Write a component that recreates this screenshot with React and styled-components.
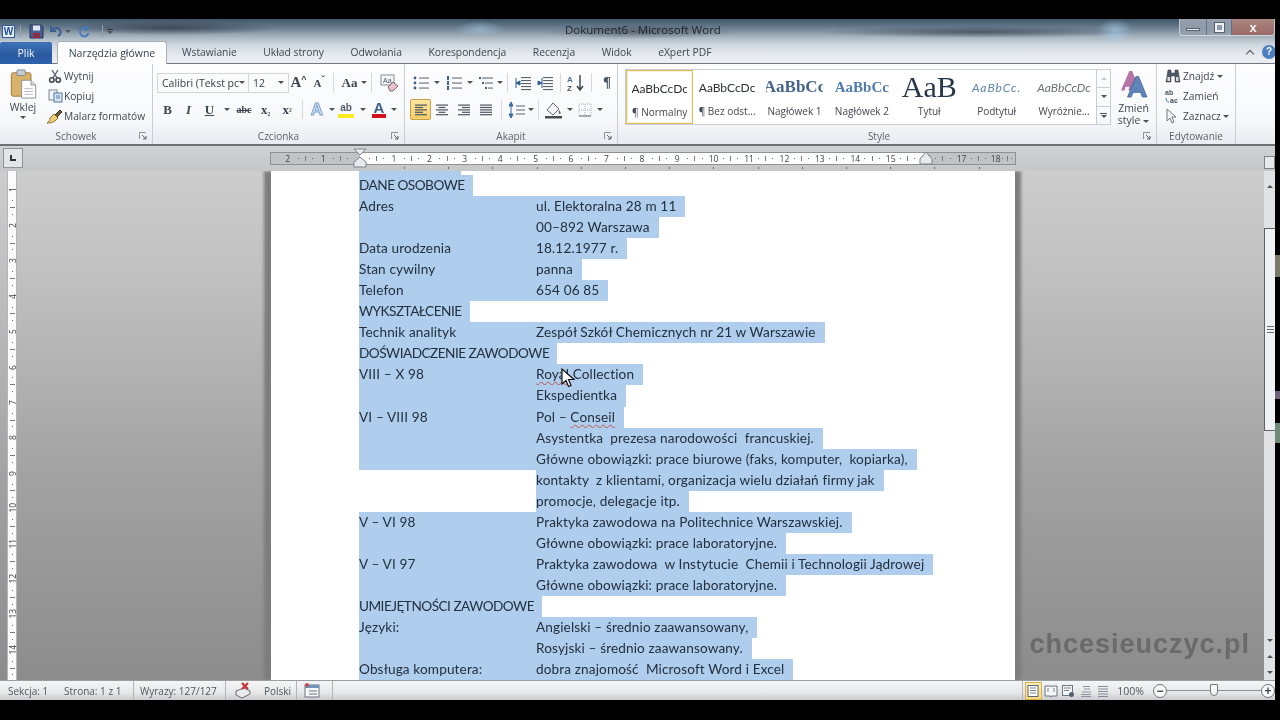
import React from 'react'
import styled, { createGlobalStyle } from 'styled-components'

const Global = createGlobalStyle`
    html, body { margin: 0; padding: 0; background: #000; }
    * { box-sizing: border-box; }
`

const uiFont = `"Open Sans", "Noto Sans", sans-serif`
const docFont = `Lato, "Open Sans", sans-serif`
const serif = `"Liberation Serif", serif`

const tabs = ['Wstawianie', 'Układ strony', 'Odwołania', 'Korespondencja', 'Recenzja', 'Widok', 'eXpert PDF']

const styleItems = [
    { sample: 'AaBbCcDc', name: '¶ Normalny', active: true, font: docFont, size: 12, color: '#2b2f36' },
    { sample: 'AaBbCcDc', name: '¶ Bez odst...', font: docFont, size: 12, color: '#2b2f36' },
    { sample: 'AaBbCc', name: 'Nagłówek 1', font: serif, size: 17, color: '#44658c', weight: 700 },
    { sample: 'AaBbCc', name: 'Nagłówek 2', font: serif, size: 15, color: '#4f7cb0', weight: 700 },
    { sample: 'AaB', name: 'Tytuł', font: serif, size: 30, color: '#27374b' },
    { sample: 'AaBbCc.', name: 'Podtytuł', font: docFont, size: 12, color: '#5f84ab', italic: true, spacing: 1 },
    { sample: 'AaBbCcDc', name: 'Wyróżnie...', font: docFont, size: 12, color: '#6c6f75', italic: true },
]

const hNumbers = [2, 1, '', ...Array.from({ length: 18 }, (_, i) => i + 1)]
const vNumbers = Array.from({ length: 14 }, (_, i) => i + 1)

const Align = ({ kind }) => {
    const widths = {
        left: [12, 8, 12, 8, 12],
        center: [12, 7, 12, 7, 12],
        right: [12, 8, 12, 8, 12],
        justify: [12, 12, 12, 12, 12],
    }[kind]
    return (
        <svg width="16" height="16" viewBox="0 0 16 16">
            {widths.map((w, i) => {
                const x = kind === 'right' ? 14 - w : kind === 'center' ? 8 - w / 2 : 2
                return <rect key={i} x={x} y={2.5 + i * 2.4} width={w} height="1.2" fill="#4f5660" />
            })}
        </svg>
    )
}

const ListIcon = ({ kind }) => (
    <svg width="18" height="16" viewBox="0 0 18 16">
        {[3, 8, 13].map((y, i) => (
            <g key={y}>
                {kind === 'bullet' && <circle cx="3" cy={y} r="1.4" fill="#3f5f85" />}
                {kind === 'number' && <rect x="2" y={y - 2} width="2" height="4" fill="#3f5f85" />}
                {kind === 'multi' && <rect x={2 + i * 3} y={y - 1} width="2" height="2" fill="#3f5f85" />}
                <rect x={kind === 'multi' ? 5 + i * 3 : 7} y={y - 0.5} width={kind === 'multi' ? 11 - i * 3 : 10} height="1.1" fill="#666e78" />
            </g>
        ))}
    </svg>
)

const IndentIcon = ({ more }) => (
    <svg width="18" height="16" viewBox="0 0 18 16">
        {[2, 5, 8, 11, 14].map(y => <rect key={y} x="7" y={y} width="10" height="1.1" fill="#5b636d" />)}
        <path d={more ? 'M6 3v10M2 6l4 2-4 2z' : 'M2 3v10M6 6L2 8l4 2z'} stroke="#2e5c93" fill="#2e5c93" strokeWidth="1" />
    </svg>
)

const PasteIcon = () => (
    <svg width="27" height="30" viewBox="0 0 28 32">
        <rect x="1" y="4" width="21" height="25" rx="2" fill="#d9b26a" stroke="#97773f" />
        <rect x="7" y="1" width="9" height="6" rx="1" fill="#c7ccd2" stroke="#7f858c" />
        <path d="M12 12h10l5 5v14H12z" fill="#fff" stroke="#8a9098" />
        <path d="M22 12v5h5" fill="#dfe3e8" stroke="#8a9098" />
        <path d="M15 21h9M15 24h9M15 27h9" stroke="#b3b8bf" />
    </svg>
)

const ScissorsIcon = () => (
    <svg width="14" height="14" viewBox="0 0 14 14">
        <path d="M4 1l5 8M10 1L5 9" stroke="#59616b" strokeWidth="1.4" />
        <circle cx="3.8" cy="11" r="2.2" fill="none" stroke="#3f4650" strokeWidth="1.6" />
        <circle cx="10.2" cy="11" r="2.2" fill="none" stroke="#3f4650" strokeWidth="1.6" />
    </svg>
)

const CopyIcon = () => (
    <svg width="15" height="14" viewBox="0 0 15 14">
        <rect x="1" y="1" width="8" height="10" fill="#eef1f5" stroke="#7d8792" />
        <rect x="6" y="4" width="8" height="9" fill="#dce8f5" stroke="#4d76a6" />
        <path d="M8 7h4M8 9h4" stroke="#4d76a6" />
    </svg>
)

const BrushIcon = () => (
    <svg width="18" height="16" viewBox="0 0 18 16">
        <path d="M9 7l5-5 2 2-5 5z" fill="#6d5a3a" stroke="#3c342a" />
        <path d="M8 6l4 4-3 3c-3 2-6 2-8 2 2-1 3-3 3-5z" fill="#f0cc72" stroke="#8f7434" />
    </svg>
)

const ClearIcon = () => (
    <svg width="20" height="18" viewBox="0 0 20 18">
        <rect x="2" y="1" width="13" height="10" fill="#f5f6f8" stroke="#858c95" />
        <text x="4" y="9" fontSize="7" fontFamily="Liberation Sans" fill="#4a5563">Aa</text>
        <path d="M9 13l5-5 5 4-5 5H11z" fill="#eac0cf" stroke="#7a6470" />
    </svg>
)

const SortIcon = () => (
    <svg width="20" height="18" viewBox="0 0 20 18">
        <text x="1" y="8" fontSize="8" fontWeight="700" fontFamily="Liberation Sans" fill="#4b6d95">A</text>
        <text x="1" y="17" fontSize="8" fontWeight="700" fontFamily="Liberation Sans" fill="#4a5563">Z</text>
        <path d="M14 1v14M11 12l3 4 3-4" fill="none" stroke="#39424d" strokeWidth="1.4" />
    </svg>
)

const SpacingIcon = () => (
    <svg width="18" height="18" viewBox="0 0 18 18">
        <path d="M3 1L1 5h4zM3 17l-2-4h4zM3 5v8" fill="#3b6ba3" stroke="#3b6ba3" />
        <path d="M8 5h9M8 9h9M8 13h9" stroke="#5b636d" strokeWidth="1.2" />
    </svg>
)

const ShadeIcon = () => (
    <svg width="20" height="18" viewBox="0 0 20 18">
        <path d="M3 9l6-7 6 6-6 6z" fill="#f3f5f8" stroke="#5d6670" />
        <path d="M15 9c2 2 2 4 1 4s-2-2-1-4z" fill="#5d6670" />
        <rect x="1" y="15" width="17" height="2.5" fill="#454d57" />
    </svg>
)

const BordersIcon = () => (
    <svg width="16" height="16" viewBox="0 0 16 16">
        <rect x="2" y="2" width="12" height="12" fill="none" stroke="#a9afb7" strokeDasharray="1 1" />
        <path d="M8 2v12M2 8h12" stroke="#a9afb7" strokeDasharray="1 1" />
        <path d="M2 14h12" stroke="#6a727c" />
    </svg>
)

const BigAIcon = () => (
    <svg width="30" height="30" viewBox="0 0 30 30">
        <path d="M1 22L10 1h3l4 10-6 11H9l1-4H6l-1 4z" fill="#a85c97" opacity="0.85" />
        <path d="M8 29L17 7h3l9 22h-5l-2-5h-8l-2 5z" fill="#5f86b8" stroke="#2f4f78" strokeWidth="0.6" />
    </svg>
)

const BinocularsIcon = () => (
    <svg width="16" height="14" viewBox="0 0 16 14">
        <path d="M3 1h3v3h4V1h3l2 12H10V7H6v6H1z" fill="#4f5862" stroke="#2f3740" strokeWidth="0.5" />
        <rect x="2.5" y="8" width="2.5" height="4" fill="#d8dde3" />
        <rect x="11" y="8" width="2.5" height="4" fill="#d8dde3" />
    </svg>
)

const ReplaceIcon = () => (
    <svg width="16" height="15" viewBox="0 0 16 15">
        <text x="0" y="6" fontSize="7" fontWeight="700" fontFamily="Liberation Sans" fill="#46505c">ab</text>
        <text x="5" y="14" fontSize="7" fontWeight="700" fontFamily="Liberation Sans" fill="#46505c">ac</text>
        <path d="M1 9c0 3 1 4 3 4" fill="none" stroke="#3e7bb8" />
    </svg>
)

const ArrowIcon = () => (
    <svg width="14" height="16" viewBox="0 0 14 16">
        <path d="M2 1v12l3-3 2 5 2-1-2-5h4z" fill="#f3f5f7" stroke="#737a83" />
    </svg>
)

const SaveIcon = () => (
    <svg width="15" height="15" viewBox="0 0 15 15">
        <path d="M1 1h11l2 2v11H1z" fill="#4a5f94" stroke="#26335c" />
        <rect x="4" y="1.5" width="7" height="5" fill="#dfe6f0" />
        <rect x="4" y="9" width="7" height="5" fill="#8d2d44" />
    </svg>
)

const UndoIcon = () => (
    <svg width="14" height="14" viewBox="0 0 14 14">
        <path d="M2 2v5h5M2.5 7C4 3.5 9 3 11 6c1.500 2.500 0 5-2 6" fill="none" stroke="#3c5f92" strokeWidth="2" />
    </svg>
)

const RedoIcon = () => (
    <svg width="14" height="14" viewBox="0 0 14 14">
        <path d="M11 1.500v4H7M11 5c-2-2-6-2-7.500 1S4 12 7 12.500c2.500 0 4-2 4.500-3.500" fill="none" stroke="#4a7ab6" strokeWidth="2" />
    </svg>
)

const SpellIcon = () => (
    <svg width="20" height="18" viewBox="0 0 20 18">
        <path d="M3 9l8-3 6 3v3l-8 4-6-3z" fill="#e9ebee" stroke="#626a74" />
        <path d="M9 1l6 6M15 1L9 7" stroke="#c8343a" strokeWidth="2.200" />
    </svg>
)

const MacroIcon = () => (
    <svg width="16" height="15" viewBox="0 0 16 15">
        <rect x="1" y="2" width="14" height="12" fill="#f5f6f8" stroke="#6d757f" />
        <rect x="1" y="2" width="14" height="3" fill="#6f93bf" />
        <circle cx="3" cy="2" r="2" fill="#c84b4b" />
        <path d="M5 8h8M5 11h8" stroke="#9aa1aa" strokeWidth="1.500" />
    </svg>
)

const ViewIcon = ({ kind }) => (
    <svg width="14" height="14" viewBox="0 0 14 14">
        {kind === 'print' && <><rect x="2" y="1.500" width="10" height="11" fill="#fff" stroke="#5f6771" /><path d="M4 4h6M4 6.500h6M4 9h6" stroke="#7b838d" /></>}
        {kind === 'read' && <><path d="M1 2h5.500l.5 1 .5-1H13v10H7.500L7 13l-.5-1H1z" fill="#f4f6f8" stroke="#6c7580" /><path d="M3 5h2M3 7h2M9 5h2M9 7h2" stroke="#7b838d" /></>}
        {kind === 'web' && <><rect x="1.500" y="1.500" width="10" height="10" fill="#f4f6f8" stroke="#6c7580" /><path d="M3 4h7M3 6.500h5" stroke="#7b838d" /><circle cx="10.500" cy="10.500" r="2.500" fill="#56606b" /></>}
        {kind === 'outline' && <path d="M4 2.500h7M5 5h6M3 8h9M2 10.500h10M2 12.500h10" stroke="#8a929c" />}
        {kind === 'draft' && <path d="M2 2.500h10M2 5h10M2 7.500h10M2 10h10M2 12.500h10" stroke="#858d97" strokeWidth="1.200" />}
    </svg>
)

const Launcher = () => (
    <LauncherBox>
        <svg width="8" height="8" viewBox="0 0 8 8">
            <path d="M0.500 7V0.500H7" fill="none" stroke="#8b929b" />
            <path d="M3 3l4 4M4 7h3V4" fill="none" stroke="#59616b" />
        </svg>
    </LauncherBox>
)

function Group({ width, label, launcher, shift, children }) {
    return (
        <GroupBox $w={width}>
            <GroupBody>{children}</GroupBody>
            <GroupLabel>
                <span />
                <LabelText $shift={shift}>{label}</LabelText>
                {launcher ? <Launcher /> : <span />}
            </GroupLabel>
        </GroupBox>
    )
}

function RulerCells({ numbers, vertical }) {
    const Cell = vertical ? VCell : HCell
    return numbers.map((n, i) => (
        <Cell key={i}>
            <RulerNum $vertical={vertical}>{n}</RulerNum>
            <RulerDot />
            <RulerTick $vertical={vertical} />
            <RulerDot />
        </Cell>
    ))
}

export default function App() {
    return (
        <Screen>
            <Global />
            <Band $h={19} />
            <Middle>
                <Win>
                    <Chrome>
                        <TitleBar>
                            <Quick>
                                <WordLogo>W</WordLogo>
                                <QuickSep />
                                <QuickBtn $w={22}><SaveIcon /></QuickBtn>
                                <QuickBtn $w={18}><UndoIcon /></QuickBtn>
                                <Caret />
                                <QuickBtn $w={26}><RedoIcon /></QuickBtn>
                                <QuickSep />
                                <Customize><Caret /></Customize>
                            </Quick>
                            <Title>Dokument6 - Microsoft Word</Title>
                            <WinControls>
                                <WinBtn $w={27}><MinBar /></WinBtn>
                                <WinBtn $w={25}><MaxBox /></WinBtn>
                                <CloseBtn>x</CloseBtn>
                            </WinControls>
                        </TitleBar>
                        <TabRow>
                            <FileTab>Plik</FileTab>
                            <ActiveTab>Narzędzia główne</ActiveTab>
                            {tabs.map(t => <Tab key={t}>{t}</Tab>)}
                            <TabEnd>
                                <Collapse />
                                <Help>?</Help>
                            </TabEnd>
                        </TabRow>
                    </Chrome>

                    <Ribbon>
                        <Group width={153} label="Schowek" launcher>
                            <PasteCol>
                                <PasteIcon />
                                <PasteLabel>Wklej</PasteLabel>
                                <Caret />
                            </PasteCol>
                            <SmallCol>
                                <SmallItem><SmallSlot><ScissorsIcon /></SmallSlot>Wytnij</SmallItem>
                                <SmallItem><SmallSlot><CopyIcon /></SmallSlot>Kopiuj</SmallItem>
                                <SmallItem><SmallSlot><BrushIcon /></SmallSlot>Malarz formatów</SmallItem>
                            </SmallCol>
                        </Group>

                        <Group width={252} label="Czcionka" launcher>
                            <Stack $left={4}>
                                <ToolRow>
                                    <Combo $w={92}>Calibri (Tekst pc<Caret /></Combo>
                                    <Combo $w={41}>12<Caret /></Combo>
                                    <Btn $w={21}><GlyphA $size={15}>A</GlyphA><Sup>^</Sup></Btn>
                                    <Btn $w={20}><GlyphA $size={11}>A</GlyphA><Sup>ˇ</Sup></Btn>
                                    <Sep />
                                    <Btn $w={23}><GlyphA $size={13}>Aa</GlyphA></Btn>
                                    <Caret />
                                    <Sep />
                                    <Btn $w={26}><ClearIcon /></Btn>
                                </ToolRow>
                                <ToolRow>
                                    <Btn $w={21}><GlyphA $size={13}>B</GlyphA></Btn>
                                    <Btn $w={21}><GlyphA $size={13} $italic>I</GlyphA></Btn>
                                    <Btn $w={21}><GlyphA $size={13} $under>U</GlyphA></Btn>
                                    <CaretSlot $w={13}><Caret /></CaretSlot>
                                    <Btn $w={22}><Strike>abc</Strike></Btn>
                                    <Btn $w={21}><GlyphA $size={13}>x<Tiny>₂</Tiny></GlyphA></Btn>
                                    <Btn $w={22}><GlyphA $size={13}>x<Tiny>²</Tiny></GlyphA></Btn>
                                    <Sep />
                                    <Btn $w={20}><GlowA>A</GlowA></Btn>
                                    <CaretSlot $w={9}><Caret /></CaretSlot>
                                    <Btn $w={20}><ColorMark $bar="#f6ec1e">ab</ColorMark></Btn>
                                    <CaretSlot $w={13}><Caret /></CaretSlot>
                                    <Btn $w={20}><ColorMark $bar="#d3121f" $big>A</ColorMark></Btn>
                                    <CaretSlot $w={10}><Caret /></CaretSlot>
                                </ToolRow>
                            </Stack>
                        </Group>

                        <Group width={213} label="Akapit" launcher>
                            <Stack $left={5}>
                                <ToolRow>
                                    <Btn $w={22}><ListIcon kind="bullet" /></Btn>
                                    <CaretSlot $w={10}><Caret /></CaretSlot>
                                    <Btn $w={23}><ListIcon kind="number" /></Btn>
                                    <CaretSlot $w={10}><Caret /></CaretSlot>
                                    <Btn $w={22}><ListIcon kind="multi" /></Btn>
                                    <CaretSlot $w={6}><Caret /></CaretSlot>
                                    <Sep />
                                    <Btn $w={22}><IndentIcon /></Btn>
                                    <Btn $w={22}><IndentIcon more /></Btn>
                                    <Sep />
                                    <Btn $w={22}><SortIcon /></Btn>
                                    <Sep />
                                    <Btn $w={22}><Pilcrow>¶</Pilcrow></Btn>
                                </ToolRow>
                                <ToolRow>
                                    <Btn $w={21} $active><Align kind="left" /></Btn>
                                    <Btn $w={22}><Align kind="center" /></Btn>
                                    <Btn $w={22}><Align kind="right" /></Btn>
                                    <Btn $w={22}><Align kind="justify" /></Btn>
                                    <Sep />
                                    <Btn $w={22}><SpacingIcon /></Btn>
                                    <CaretSlot $w={6}><Caret /></CaretSlot>
                                    <Sep />
                                    <Btn $w={22}><ShadeIcon /></Btn>
                                    <CaretSlot $w={10}><Caret /></CaretSlot>
                                    <Btn $w={20}><BordersIcon /></Btn>
                                    <CaretSlot $w={10}><Caret /></CaretSlot>
                                </ToolRow>
                            </Stack>
                        </Group>

                        <Group width={539} label="Style" launcher shift={16}>
                            <Gallery>
                                {styleItems.map(s => (
                                    <StyleItem key={s.name} $active={s.active}>
                                        <StyleSample $font={s.font} $size={s.size} $color={s.color} $weight={s.weight} $italic={s.italic} $spacing={s.spacing}>{s.sample}</StyleSample>
                                        <StyleName>{s.name}</StyleName>
                                    </StyleItem>
                                ))}
                            </Gallery>
                            <GalleryScroll>
                                <ScrollCell><Caret $up $pale /></ScrollCell>
                                <ScrollCell><Caret /></ScrollCell>
                                <ScrollCell><More /><Caret /></ScrollCell>
                            </GalleryScroll>
                            <ChangeStyle>
                                <BigAIcon />
                                <ChangeLabel>Zmień</ChangeLabel>
                                <ChangeLabel>style <Caret /></ChangeLabel>
                            </ChangeStyle>
                        </Group>

                        <Group width={79} label="Edytowanie">
                            <EditCol>
                                <SmallItem><EditSlot><BinocularsIcon /></EditSlot>Znajdź <Caret /></SmallItem>
                                <SmallItem><EditSlot><ReplaceIcon /></EditSlot>Zamień</SmallItem>
                                <SmallItem><EditSlot><ArrowIcon /></EditSlot>Zaznacz <Caret /></SmallItem>
                            </EditCol>
                        </Group>
                    </Ribbon>

                    <RulerRow>
                        <TabCorner><CornerMark /></TabCorner>
                        <HRuler>
                            <RulerCells numbers={hNumbers} />
                            <IndentMark $left={82}>
                                <svg width="14" height="20" viewBox="0 0 14 20">
                                    <path d="M1 1h12L7 7zM7 9l6 5v5H1v-5z" fill="#e8eaed" stroke="#7c838b" />
                                </svg>
                            </IndentMark>
                            <IndentMark $left={648}>
                                <svg width="14" height="20" viewBox="0 0 14 20">
                                    <path d="M7 4l6 7v5H1v-5z" fill="#e8eaed" stroke="#7c838b" />
                                </svg>
                            </IndentMark>
                        </HRuler>
                        <RulerToggle />
                    </RulerRow>

                    <Workspace>
                        <VRuler>
                            <RulerCells numbers={vNumbers} vertical />
                        </VRuler>
                        <Canvas>
                            <Page>
                                <TopSliver />
                                {rows.map((r, i) => (
                                    <Line key={i}>
                                        <LeftCell $solo={!r.right} $clear={r.clear}>{r.left}</LeftCell>
                                        {r.right && <RightCell>{r.right}</RightCell>}
                                    </Line>
                                ))}
                            </Page>
                            <Watermark>chcesieuczyc.pl</Watermark>
                            <Pointer>
                                <svg width="14" height="20" viewBox="0 0 14 20">
                                    <path d="M1 1v15l4-3.500 2.500 6 2.500-1-2.500-6H13z" fill="#fff" stroke="#111" strokeWidth="1.200" />
                                </svg>
                            </Pointer>
                        </Canvas>
                        <ScrollBar>
                            <ScrollArrow $top={7}><Caret $up /></ScrollArrow>
                            <Thumb><Grip /></Thumb>
                            <ScrollFoot>
                                <ScrollArrow><Caret /></ScrollArrow>
                                <ScrollArrow><Caret $up /></ScrollArrow>
                                <ScrollArrow><Caret /></ScrollArrow>
                            </ScrollFoot>
                        </ScrollBar>
                    </Workspace>

                    <StatusBar>
                        <StatusText $w={56} $left={8}>Sekcja: 1</StatusText>
                        <StatusText $w={67}>Strona: 1 z 1</StatusText>
                        <StatusSep />
                        <StatusText $w={83} $left={4}>Wyrazy: 127/127</StatusText>
                        <StatusSep />
                        <StatusIcon $w={30}><SpellIcon /></StatusIcon>
                        <StatusText $w={30} $left={6}>Polski</StatusText>
                        <StatusSep />
                        <StatusIcon $w={31} $right={6}><MacroIcon /></StatusIcon>
                        <StatusSep />
                        <StatusRight>
                            <StatusSep />
                            <ViewBtn $active><ViewIcon kind="print" /></ViewBtn>
                            <ViewBtn><ViewIcon kind="read" /></ViewBtn>
                            <ViewBtn><ViewIcon kind="web" /></ViewBtn>
                            <ViewBtn><ViewIcon kind="outline" /></ViewBtn>
                            <ViewBtn><ViewIcon kind="draft" /></ViewBtn>
                            <Zoom>100%</Zoom>
                            <ZoomRound>−</ZoomRound>
                            <ZoomTrack><ZoomThumb /></ZoomTrack>
                            <ZoomRound>+</ZoomRound>
                        </StatusRight>
                    </StatusBar>
                </Win>
                <Noise />
            </Middle>
            <Band $h={20} />
        </Screen>
    )
}

const Screen = styled.div`
    width: 1280px;
    height: 720px;
    display: flex;
    flex-direction: column;
    background: #000;
    overflow: hidden;
    font-family: ${uiFont};
    filter: blur(0.35px);
`
const Band = styled.div`
    height: ${p => p.$h}px;
    flex: none;
    background: #000;
`
const Middle = styled.div`
    flex: 1;
    display: flex;
    min-height: 0;
`
const Win = styled.div`
    width: 1275px;
    display: flex;
    flex-direction: column;
`
const Noise = styled.div`
    flex: 1;
    background:
        linear-gradient(#000 0 236px, #7b7a68 236px 258px, #000 258px 372px, #6f6478 372px 380px, #000 380px 404px, #718a78 404px 424px, #000 424px);
`
const Chrome = styled.div`
    height: 45px;
    flex: none;
    display: flex;
    flex-direction: column;
    background:
        radial-gradient(ellipse 110px 7px at 170px 9px, rgba(35, 45, 60, 0.65), transparent),
        radial-gradient(ellipse 160px 6px at 980px 13px, rgba(35, 45, 60, 0.6), transparent),
        radial-gradient(ellipse 100px 7px at 640px 13px, rgba(35, 45, 60, 0.45), transparent),
        radial-gradient(ellipse 18px 12px at 1115px 12px, rgba(170, 210, 240, 0.7), transparent),
        radial-gradient(ellipse 24px 8px at 480px 10px, rgba(170, 205, 230, 0.55), transparent),
        linear-gradient(#3f5468 0, #677a8c 8px, #a8b5c0 18px, #d0d8de 26px, #e6eaee 36px, #eceff3 45px);
`
const TitleBar = styled.div`
    height: 22px;
    display: grid;
    grid-template-columns: 565px auto 1fr;
    align-items: start;
`
const Quick = styled.div`
    display: flex;
    align-items: center;
    height: 22px;
    padding: 2px 0 0 2px;
`
const WordLogo = styled.span`
    width: 13px;
    height: 13px;
    background: #e8eef7;
    border: 1px solid #2f5d9c;
    color: #1d4f96;
    font: 700 10px/11px "Liberation Sans", sans-serif;
    text-align: center;
`
const QuickSep = styled.span`
    width: 1px;
    height: 13px;
    margin: 0 4px 0 5px;
    background: #94a0ab;
`
const QuickBtn = styled.span`
    width: ${p => p.$w}px;
    display: flex;
    justify-content: center;
`
const Customize = styled.span`
    display: flex;
    border-top: 1px solid #333;
    padding-top: 1px;
`
const Title = styled.div`
    font-size: 11.5px;
    line-height: 22px;
    color: #1c2229;
    padding-top: 0;
    white-space: pre;
`
const WinControls = styled.div`
    justify-self: end;
    display: flex;
    height: 17px;
    border: 1px solid rgba(225, 232, 240, 0.75);
    border-top: 0;
    border-radius: 0 0 4px 4px;
    overflow: hidden;
`
const WinBtn = styled.div`
    width: ${p => p.$w}px;
    display: flex;
    align-items: center;
    justify-content: center;
    border-right: 1px solid rgba(60, 70, 85, 0.5);
    background: linear-gradient(rgba(255, 255, 255, 0.45), rgba(130, 145, 160, 0.25));
`
const MinBar = styled.span`
    width: 14px;
    height: 3px;
    margin-top: 4px;
    background: #eef2f5;
    border: 1px solid #56616d;
`
const MaxBox = styled.span`
    width: 9px;
    height: 9px;
    border: 2px solid #eef2f5;
    outline: 1px solid #56616d;
`
const CloseBtn = styled.div`
    width: 42px;
    display: flex;
    align-items: center;
    justify-content: center;
    color: #f4f4f4;
    font: 700 13px/15px "Liberation Sans", sans-serif;
    background: linear-gradient(#a9857f, #9b6a67);
`
const TabRow = styled.div`
    height: 23px;
    display: flex;
    align-items: flex-end;
    border-bottom: 1px solid #74787e;
`
const FileTab = styled.div`
    width: 52px;
    height: 22px;
    margin-bottom: -1px;
    display: flex;
    align-items: center;
    justify-content: center;
    color: #f1f5fb;
    font-size: 10.5px;
    background: linear-gradient(#3f72b8, #2a5aa0 60%, #2c62ad);
    border-radius: 2px 2px 0 0;
`
const ActiveTab = styled.div`
    width: 110px;
    height: 23px;
    margin: 0 0 -1px 5px;
    display: flex;
    align-items: center;
    justify-content: center;
    font-size: 10.5px;
    color: #3b4450;
    background: linear-gradient(#fbfcfd, #fff);
    border: 1px solid #a9aeb4;
    border-bottom: 0;
    border-radius: 3px 3px 0 0;
`
const Tab = styled.div`
    height: 22px;
    margin-left: 26.5px;
    display: flex;
    align-items: center;
    font-size: 10.3px;
    color: #3f4752;
    &:nth-of-type(3) { margin-left: 15px; }
`
const TabEnd = styled.div`
    margin-left: auto;
    height: 22px;
    display: flex;
    align-items: center;
    gap: 9px;
    margin-right: -1px;
`
const Collapse = styled.span`
    width: 6px;
    height: 6px;
    margin-top: 4px;
    border-left: 1.5px solid #4b535d;
    border-top: 1.5px solid #4b535d;
    transform: rotate(45deg);
`
const Help = styled.span`
    width: 14px;
    height: 14px;
    border-radius: 50%;
    background: #4a7fc0;
    color: #fff;
    font: 700 10px/14px "Liberation Sans", sans-serif;
    text-align: center;
`
const Ribbon = styled.div`
    height: 82px;
    flex: none;
    display: flex;
    background: linear-gradient(#fdfdfe, #f8f9fb 65%, #e9ecf0);
    border-bottom: 2px solid #6e7175;
`
const GroupBox = styled.div`
    width: ${p => p.$w}px;
    flex: none;
    display: flex;
    flex-direction: column;
    border-right: 1px solid #c9ced5;
`
const GroupBody = styled.div`
    flex: 1;
    display: flex;
    min-height: 0;
`
const GroupLabel = styled.div`
    height: 18px;
    padding: 2px 5px 0;
    display: grid;
    grid-template-columns: 1fr auto 1fr;
    align-items: center;
    font-size: 10px;
    color: #5b636e;
`
const LabelText = styled.span`
    margin-right: ${p => p.$shift || 0}px;
`
const LauncherBox = styled.span`
    justify-self: end;
    display: flex;
`
const Caret = styled.span`
    display: inline-block;
    width: 0;
    height: 0;
    vertical-align: middle;
    border-left: 3px solid transparent;
    border-right: 3px solid transparent;
    border-top: ${p => (p.$up ? '0' : `3px solid ${p.$pale ? '#c5c9ce' : '#4b535d'}`)};
    border-bottom: ${p => (p.$up ? `3px solid ${p.$pale ? '#c5c9ce' : '#4b535d'}` : '0')};
`
const PasteCol = styled.div`
    width: 46px;
    display: flex;
    flex-direction: column;
    align-items: center;
    padding-top: 5px;
`
const PasteLabel = styled.span`
    font-size: 10.5px;
    line-height: 14px;
    margin: 1px 0 2px;
    color: #3f4752;
`
const SmallCol = styled.div`
    display: flex;
    flex-direction: column;
    gap: 0;
    padding-top: 2.5px;
`
const SmallItem = styled.div`
    height: 20.5px;
    display: flex;
    align-items: center;
    gap: 0;
    font-size: 10.2px;
    color: #3f4752;
    white-space: pre;
`
const SmallSlot = styled.span`
    width: 18px;
    display: flex;
    justify-content: center;
`
const EditCol = styled(SmallCol)`
    padding-left: 8px;
`
const EditSlot = styled.span`
    width: 18px;
    display: flex;
`
const Stack = styled.div`
    display: flex;
    flex-direction: column;
    gap: 6px;
    padding: 8px 0 0 ${p => p.$left}px;
`
const ToolRow = styled.div`
    height: 21px;
    display: flex;
    align-items: center;
`
const Combo = styled.div`
    width: ${p => p.$w}px;
    height: 20px;
    padding: 0 4px;
    display: flex;
    align-items: center;
    justify-content: space-between;
    font-size: 10.5px;
    color: #3a4049;
    background: #fbfbfc;
    border: 1px solid #d3d7dc;
    margin-right: -1px;
    white-space: nowrap;
    overflow: hidden;
`
const Btn = styled.div`
    width: ${p => p.$w}px;
    height: 21px;
    flex: none;
    display: flex;
    align-items: center;
    justify-content: center;
    border-radius: 2px;
    ${p => p.$active && `
        background: linear-gradient(#fde6a0, #f9cf68);
        border: 1px solid #c9a14b;
    `}
`
const CaretSlot = styled.span`
    width: ${p => p.$w}px;
    flex: none;
    display: flex;
    justify-content: center;
`
const Sep = styled.span`
    width: 1px;
    height: 19px;
    flex: none;
    margin: 0 4px;
    background: #d5d9de;
`
const GlyphA = styled.span`
    font-family: ${serif};
    font-weight: 700;
    font-size: ${p => p.$size}px;
    font-style: ${p => (p.$italic ? 'italic' : 'normal')};
    text-decoration: ${p => (p.$under ? 'underline' : 'none')};
    color: #3c4550;
`
const Sup = styled.span`
    font: 700 9px/8px "Liberation Sans", sans-serif;
    color: #3c4550;
    align-self: flex-start;
    margin-top: 3px;
`
const Tiny = styled.span`
    font-size: 9px;
`
const Strike = styled.span`
    font: 700 10px ${serif};
    text-decoration: line-through;
    color: #3c4550;
`
const GlowA = styled.span`
    font: 700 17px "Liberation Sans", sans-serif;
    color: #d4e3f4;
    -webkit-text-stroke: 1px #7da4d0;
`
const ColorMark = styled.span`
    font: ${p => (p.$big ? '700 15px/13px' : '700 10px/12px')} "Liberation Sans", sans-serif;
    color: ${p => (p.$big ? '#3f5e8a' : '#55606d')};
    border-bottom: 4px solid ${p => p.$bar};
    padding: 0 2px;
`
const Pilcrow = styled.span`
    font: 700 15px ${serif};
    color: #4a5461;
`
const Gallery = styled.div`
    width: 472px;
    height: 56px;
    margin: 5px 0 0 7px;
    display: flex;
    background: #fff;
    border: 1px solid #c9ced5;
    flex: none;
`
const StyleItem = styled.div`
    width: 67.4px;
    flex: none;
    display: flex;
    flex-direction: column;
    align-items: center;
    padding: 0 5px;
    overflow: hidden;
    ${p => p.$active && `
        border: 1.5px solid #e2bd5f;
        box-shadow: inset 0 0 0 1px #fdf4d6;
    `}
`
const StyleSample = styled.div`
    height: 34px;
    width: 100%;
    display: flex;
    align-items: center;
    justify-content: center;
    overflow: hidden;
    white-space: nowrap;
    font-family: ${p => p.$font};
    font-size: ${p => p.$size}px;
    color: ${p => p.$color};
    font-weight: ${p => p.$weight || 400};
    font-style: ${p => (p.$italic ? 'italic' : 'normal')};
    letter-spacing: ${p => p.$spacing || 0}px;
`
const StyleName = styled.div`
    font-size: 10px;
    line-height: 14px;
    color: #3f4752;
    white-space: nowrap;
`
const GalleryScroll = styled.div`
    width: 14px;
    height: 56px;
    margin-top: 5px;
    flex: none;
    display: flex;
    flex-direction: column;
    border: 1px solid #c9ced5;
    border-left: 0;
`
const ScrollCell = styled.div`
    flex: 1;
    display: flex;
    flex-direction: column;
    gap: 1px;
    align-items: center;
    justify-content: center;
    & + & { border-top: 1px solid #c9ced5; }
`
const More = styled.span`
    width: 7px;
    height: 1px;
    background: #4b535d;
`
const ChangeStyle = styled.div`
    flex: 1;
    display: flex;
    flex-direction: column;
    align-items: center;
    padding-top: 6px;
`
const ChangeLabel = styled.span`
    font-size: 10.5px;
    line-height: 12px;
    color: #3f4752;
    &:first-of-type { margin-top: 4px; }
`
const RulerRow = styled.div`
    height: 25px;
    flex: none;
    display: flex;
    align-items: flex-start;
    padding: 2px 0 0 3px;
    background: linear-gradient(#d0d1d2, #c6c7c8);
`
const TabCorner = styled.div`
    width: 20px;
    height: 20px;
    display: flex;
    align-items: center;
    justify-content: center;
    border: 1px solid #8f9296;
    background: #e4e5e6;
`
const CornerMark = styled.span`
    width: 6px;
    height: 6px;
    border-left: 2px solid #333;
    border-bottom: 2px solid #333;
`
const HRuler = styled.div`
    position: relative;
    width: 746px;
    height: 13px;
    margin: 4px 0 0 247px;
    padding-left: 9.6px;
    display: flex;
    border: 1px solid #8e9195;
    background: linear-gradient(90deg, #c2c3c5 89px, #fdfdfd 89px 656px, #c2c3c5 656px);
    overflow: visible;
    &::after {
        content: '';
        position: absolute;
        left: 133px;
        right: 0;
        top: 14px;
        height: 2px;
        background: repeating-linear-gradient(90deg, #6b6f74 0 1px, transparent 1px 44.2px);
    }
`
const HCell = styled.div`
    width: 35.43px;
    flex: none;
    display: flex;
    align-items: center;
    justify-content: space-around;
    overflow: visible;
    &:nth-last-child(3) { width: 25px; overflow: hidden; }
`
const VCell = styled.div`
    height: 35.43px;
    width: 100%;
    flex: none;
    display: flex;
    flex-direction: column;
    align-items: center;
    justify-content: space-around;
`
const RulerNum = styled.span`
    width: 8px;
    height: 9px;
    font-size: 8.5px;
    line-height: 9px;
    text-align: center;
    color: #3c3f44;
    transform: ${p => (p.$vertical ? 'rotate(-90deg)' : 'none')};
`
const RulerDot = styled.span`
    width: 1px;
    height: 1px;
    background: #666a70;
`
const RulerTick = styled.span`
    width: ${p => (p.$vertical ? '5px' : '1px')};
    height: ${p => (p.$vertical ? '1px' : '5px')};
    background: #777b80;
`
const IndentMark = styled.div`
    position: absolute;
    left: ${p => p.$left}px;
    top: -5px;
    display: flex;
`
const RulerToggle = styled.div`
    width: 11px;
    height: 13px;
    margin: 8px 0 0 auto;
    border: 1px solid #7d8186;
    background: #e8e9ea;
`
const Workspace = styled.div`
    flex: 1;
    min-height: 0;
    display: flex;
    background: linear-gradient(#cdcdcd, #bdbdbd 25%, #a2a2a2 60%, #8c8c8c);
`
const VRuler = styled.div`
    width: 10px;
    margin-left: 7px;
    padding-top: 11.5px;
    flex: none;
    display: flex;
    flex-direction: column;
    overflow: hidden;
    background: #fbfbfb;
    border-left: 1px solid #b4b5b7;
    border-right: 1px solid #b4b5b7;
`
const Canvas = styled.div`
    position: relative;
    flex: 1;
    min-width: 0;
    overflow: hidden;
    padding-left: 254px;
`
const Page = styled.div`
    width: 744px;
    height: 100%;
    padding-left: 88px;
    background: #fff;
    box-shadow: -7px 0 3px #7d7d7d, 6px 0 3px #7d7d7d;
    overflow: hidden;
    font-family: ${docFont};
    font-size: 13.6px;
    letter-spacing: 0.13px;
    color: #22303f;
`
const TopSliver = styled.div`
    width: 102px;
    height: 4px;
    background: #afcdec;
`
const Line = styled.div`
    height: 21.05px;
    display: flex;
    align-items: stretch;
    line-height: 21px;
    white-space: pre;
`
const LeftCell = styled.div`
    width: ${p => (p.$solo ? 'auto' : '177px')};
    flex: none;
    padding-right: ${p => (p.$solo ? 8 : 0)}px;
    letter-spacing: ${p => (p.$solo ? '-0.5px' : 'inherit')};
    background: ${p => (p.$clear ? 'transparent' : '#afcdec')};
`
const RightCell = styled.div`
    flex: none;
    padding-right: 9px;
    background: #afcdec;
`
const Squiggle = styled.span`
    text-decoration: underline wavy #c0534f 1px;
    text-underline-offset: 2px;
`
const Watermark = styled.div`
    position: absolute;
    right: 14px;
    bottom: 20px;
    font: 700 27px "Liberation Sans", sans-serif;
    letter-spacing: 1px;
    color: #6a6a6a;
    text-shadow: 1px 1px 1px #8f8f8f;
`
const Pointer = styled.div`
    position: absolute;
    left: 544px;
    top: 197px;
    display: flex;
`
const ScrollBar = styled.div`
    width: 11px;
    flex: none;
    display: flex;
    flex-direction: column;
    background: #e1e2e4;
`
const ScrollArrow = styled.div`
    height: 16px;
    margin-top: ${p => p.$top || 0}px;
    display: flex;
    align-items: center;
    justify-content: center;
`
const Thumb = styled.div`
    height: 203px;
    margin-top: 34px;
    display: flex;
    align-items: center;
    justify-content: center;
    background: #f1f2f3;
    border: 1px solid #5f6267;
    border-right: 0;
`
const Grip = styled.span`
    width: 7px;
    height: 7px;
    background: repeating-linear-gradient(#666a70 0 1px, transparent 1px 3px);
`
const ScrollFoot = styled.div`
    margin-top: auto;
    display: flex;
    flex-direction: column;
`
const StatusBar = styled.div`
    height: 20px;
    flex: none;
    display: flex;
    align-items: center;
    background: linear-gradient(#f4f5f6, #e7e8ea 60%, #c9cbce);
    border-top: 1px solid #9b9c9f;
`
const StatusText = styled.div`
    width: ${p => p.$w + (p.$left || 0)}px;
    padding-left: ${p => p.$left || 0}px;
    font-size: 10px;
    color: #50565e;
    white-space: nowrap;
`
const StatusIcon = styled.div`
    width: ${p => p.$w}px;
    padding-right: ${p => p.$right || 0}px;
    display: flex;
    justify-content: center;
`
const StatusSep = styled.span`
    width: 1px;
    height: 19px;
    margin: 0 2px;
    background: #b3b5b9;
`
const StatusRight = styled.div`
    margin-left: auto;
    display: flex;
    align-items: center;
`
const ViewBtn = styled.div`
    width: 17px;
    height: 18px;
    margin-right: 0.5px;
    display: flex;
    align-items: center;
    justify-content: center;
    ${p => p.$active && `
        background: linear-gradient(#fdeeb3, #f9d97f);
        border: 1px solid #d6b04f;
    `}
`
const Zoom = styled.span`
    margin: 0 9px 0 5px;
    font-size: 10.5px;
    color: #50565e;
`
const ZoomRound = styled.span`
    width: 14px;
    height: 14px;
    border-radius: 50%;
    background: #f7f8f9;
    border: 1px solid #71767c;
    color: #41464d;
    font: 700 12px/12px "Liberation Sans", sans-serif;
    text-align: center;
`
const ZoomTrack = styled.div`
    position: relative;
    width: 94px;
    height: 1px;
    background: #8d9197;
`
const ZoomThumb = styled.span`
    position: absolute;
    left: 43px;
    top: -6px;
    width: 8px;
    height: 12px;
    background: #f5f6f7;
    border: 1px solid #71767c;
    border-radius: 1px 1px 4px 4px;
`

const rows = [
    { left: 'DANE OSOBOWE' },
    { left: 'Adres', right: 'ul. Elektoralna 28 m 11' },
    { left: '', right: '00–892 Warszawa' },
    { left: 'Data urodzenia', right: '18.12.1977 r.' },
    { left: 'Stan cywilny', right: 'panna' },
    { left: 'Telefon', right: '654 06 85' },
    { left: 'WYKSZTAŁCENIE' },
    { left: 'Technik analityk', right: 'Zespół Szkół Chemicznych nr 21 w Warszawie' },
    { left: 'DOŚWIADCZENIE ZAWODOWE' },
    { left: 'VIII – X 98', right: <><Squiggle>Royal</Squiggle> Collection</> },
    { left: '', right: 'Ekspedientka' },
    { left: 'VI – VIII 98', right: <>Pol – <Squiggle>Conseil</Squiggle></> },
    { left: '', right: 'Asystentka  prezesa narodowości  francuskiej.' },
    { left: '', right: 'Główne obowiązki: prace biurowe (faks, komputer,  kopiarka),' },
    { left: '', right: 'kontakty  z klientami, organizacja wielu działań firmy jak', clear: true },
    { left: '', right: 'promocje, delegacje itp.', clear: true },
    { left: 'V – VI 98', right: 'Praktyka zawodowa na Politechnice Warszawskiej.' },
    { left: '', right: 'Główne obowiązki: prace laboratoryjne.' },
    { left: 'V – VI 97', right: 'Praktyka zawodowa  w Instytucie  Chemii i Technologii Jądrowej' },
    { left: '', right: 'Główne obowiązki: prace laboratoryjne.' },
    { left: 'UMIEJĘTNOŚCI ZAWODOWE' },
    { left: 'Języki:', right: 'Angielski – średnio zaawansowany,' },
    { left: '', right: 'Rosyjski – średnio zaawansowany.' },
    { left: 'Obsługa komputera:', right: 'dobra znajomość  Microsoft Word i Excel' },
]
